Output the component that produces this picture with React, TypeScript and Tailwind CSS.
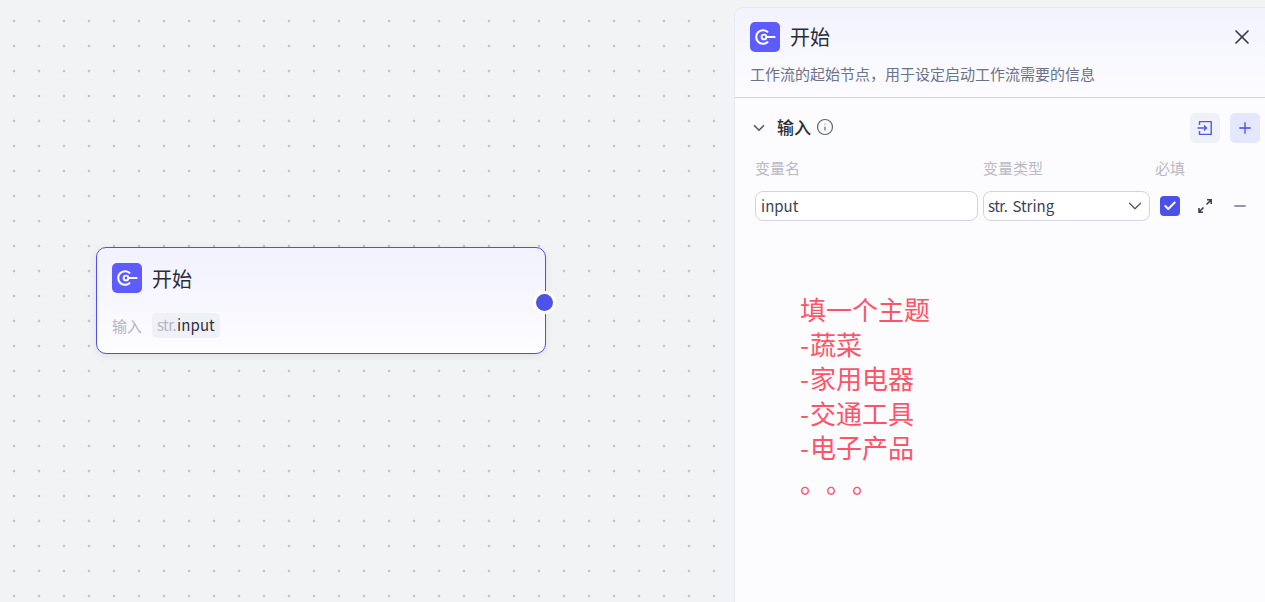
import { ChevronDown, Info, Minus, Plus, X, Check } from 'lucide-react'

const font = 'font-["Noto_Sans_CJK_SC","Noto_Sans",sans-serif]'

function StartIcon() {
  return (
    <div className="flex h-[30px] w-[30px] shrink-0 items-center justify-center rounded-[5px] bg-[#5c5cff]">
      <svg width="24" height="24" viewBox="0 0 24 24" fill="none" stroke="#ffffff" strokeLinecap="round">
        <path d="M14.4 6.8 A6.8 6.8 0 1 0 14.4 17.2" strokeWidth="2.1" />
        <circle cx="11" cy="12" r="2.4" strokeWidth="1.9" />
        <path d="M13.4 12 H21.5" strokeWidth="2.2" />
      </svg>
    </div>
  )
}

function ImportIcon() {
  return (
    <svg width="18" height="18" viewBox="0 0 18 18" fill="none" stroke="#4f56ee" strokeWidth="1.4">
      <path d="M3.5 6 V2.6 H15.2 V15.4 H3.5 V12" strokeLinejoin="round" />
      <path d="M1.5 9 H10.5 M8 6.6 L10.5 9 L8 11.4" />
    </svg>
  )
}

function ExpandIcon() {
  return (
    <svg width="16" height="16" viewBox="0 0 16 16" fill="none" stroke="#3a3f52" strokeWidth="1.6">
      <path d="M9.5 6.5 L14 2 M10 1.8 H14.2 V6" />
      <path d="M6.5 9.5 L2 14 M2 10 V14.2 H6" />
    </svg>
  )
}

export default function App() {
  return (
    <div className={`${font} relative flex h-[602px] w-[1265px] justify-end overflow-hidden bg-[#f2f3f5] bg-[radial-gradient(circle,#6f6f79_0.6px,transparent_1.1px)] bg-[size:25px_25px] bg-[position:1.5px_8.5px]`}>
      {/* node on the canvas */}
      <div className="absolute left-[96px] top-[247px] h-[107px] w-[450px] rounded-[10px] border border-[#4f4ff0] bg-gradient-to-b from-[#f2f2ff] to-[#fdfcff] shadow-[0_2px_8px_rgba(16,24,40,0.08)]">
        <div className="ml-[15px] mt-[15px] flex items-center gap-[10px]">
          <StartIcon />
          <span className="translate-y-[1px] text-[20px] leading-[30px] text-[#2b2c36]">开始</span>
        </div>
        <div className="ml-[15px] mt-[20px] flex items-center gap-[10px]">
          <span className="text-[15px] leading-[25px] text-[#b5b5bd]">输入</span>
          <span className="flex h-[25px] items-center rounded-[5px] bg-[#f0f0f7] pl-[5px] pr-[5px]">
            <span className="text-[15px] tracking-[-0.6px] text-[#b4b6c6]">str.</span>
            <span className="ml-[1px] text-[15px] tracking-[0.1px] text-[#2b3040]">input</span>
          </span>
        </div>
        <div className="absolute right-[-11px] top-[43px] h-[23px] w-[23px] rounded-full border-[3px] border-white bg-[#4f52e8]" />
      </div>

      {/* side panel */}
      <div className="mt-[7px] h-[595px] w-[531px] rounded-tl-[10px] border-l border-t border-[#e8e9f0] bg-[#fcfcff]">
        <div className="h-[90px] rounded-tl-[10px] border-b border-[#d3d3de] bg-gradient-to-b from-[#f3f3ff] to-[#fcfcff] px-[15px] pt-[14px]">
          <div className="flex items-center gap-[10px]">
            <StartIcon />
            <span className="text-[20px] leading-[30px] text-[#2b2c36]">开始</span>
            <X className="ml-auto mr-[-4px] h-[24px] w-[24px] text-[#3a3d4c]" strokeWidth={1.7} />
          </div>
          <p className="mt-[10px] text-[15px] leading-[24px] text-[#6d7386]">工作流的起始节点，用于设定启动工作流需要的信息</p>
        </div>

        <div className="flex items-center pl-[15px] pr-[5px] pt-[15px]">
          <ChevronDown className="h-[18px] w-[18px] text-[#555a6b]" strokeWidth={2.2} />
          <span className="ml-[9px] -translate-y-[1px] text-[17px] font-medium leading-[30px] text-[#2b2c36]">输入</span>
          <Info className="ml-[5px] -translate-y-[1px] h-[18px] w-[18px] text-[#5f6373]" strokeWidth={1.6} />
          <div className="ml-auto flex gap-[10px]">
            <div className="flex h-[30px] w-[30px] items-center justify-center rounded-[5px] bg-[#f0f1f8]">
              <ImportIcon />
            </div>
            <div className="flex h-[30px] w-[30px] items-center justify-center rounded-[5px] bg-[#e5e7ff]">
              <Plus className="h-[18px] w-[18px] text-[#4149ee]" strokeWidth={1.7} />
            </div>
          </div>
        </div>

        <div className="mt-[12px] flex pl-[20px] text-[15px] leading-[25px] text-[#b9bac2]">
          <span className="w-[228px]">变量名</span>
          <span className="w-[172px]">变量类型</span>
          <span>必填</span>
        </div>

        <div className="mt-[11px] flex items-center pl-[20px]">
          <div className="flex h-[30px] w-[223px] items-center rounded-[8px] border border-[#d1d3e3] bg-white px-[5px] text-[15px] text-[#3c4256]">input</div>
          <div className="ml-[5px] flex h-[30px] w-[167px] items-center rounded-[8px] border border-[#d1d3e3] bg-white pl-[4px] pr-[3px] text-[15px] text-[#3c4256]">
            <span className="tracking-[-0.5px]">str.</span>
            <span className="ml-[5px]">String</span>
            <ChevronDown className="ml-auto h-[22px] w-[22px] text-[#4d5162]" strokeWidth={1.3} />
          </div>
          <div className="ml-[10px] flex h-[20px] w-[20px] items-center justify-center rounded-[4px] bg-[#4c50e8]">
            <Check className="h-[14px] w-[14px] text-white" strokeWidth={3.5} />
          </div>
          <div className="ml-[17px]">
            <ExpandIcon />
          </div>
          <Minus className="ml-[18px] h-[18px] w-[18px] text-[#2f3446]" strokeWidth={1.5} />
        </div>

        <div className="ml-[65px] mt-[71px] text-[26px] leading-[34.5px] text-[#ff5468] [text-spacing-trim:space-all]">
          <div>填一个主题</div>
          <div>-<span className="ml-[1px]">蔬菜</span></div>
          <div>-<span className="ml-[1px]">家用电器</span></div>
          <div>-<span className="ml-[1px]">交通工具</span></div>
          <div>-<span className="ml-[1px]">电子产品</span></div>
          <div>。。。</div>
        </div>
      </div>
    </div>
  )
}
